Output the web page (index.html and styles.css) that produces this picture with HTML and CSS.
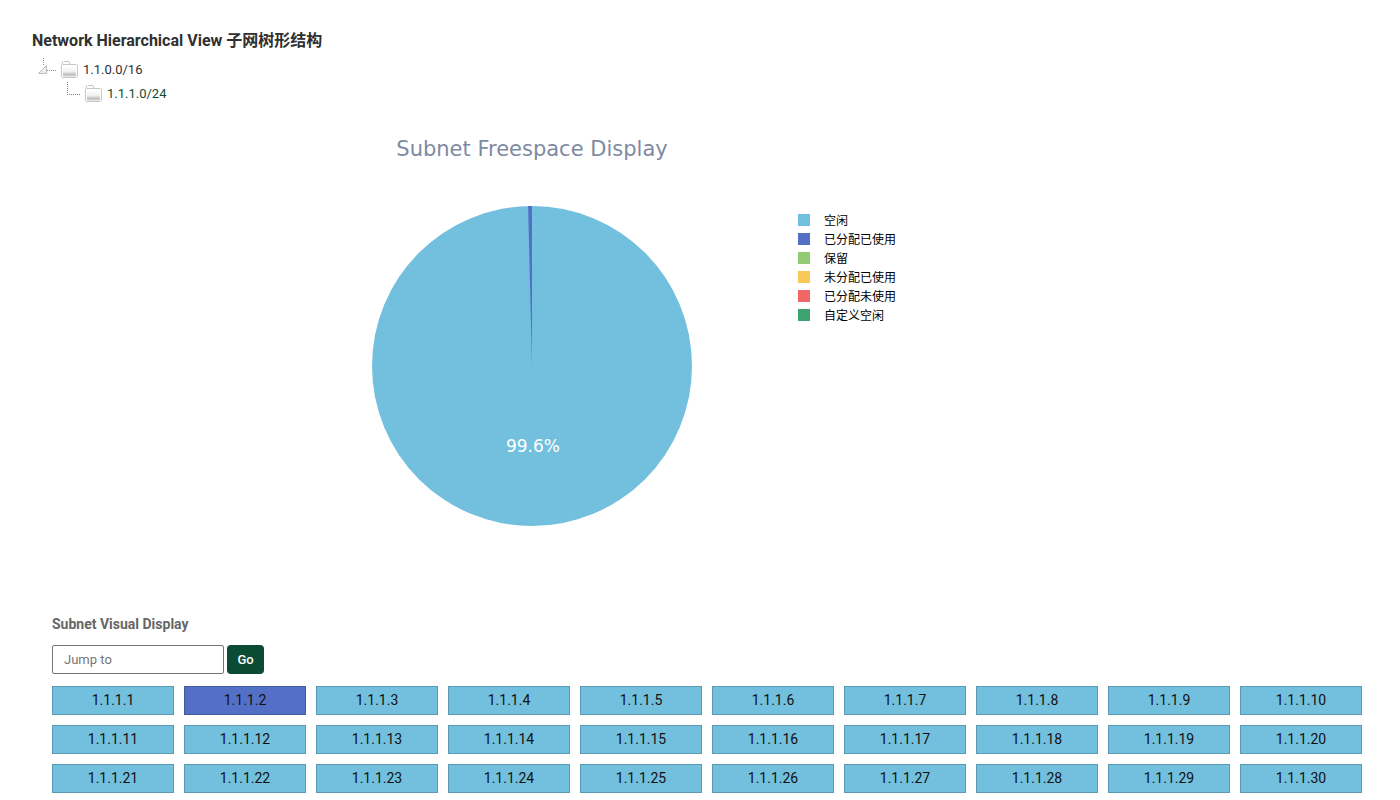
FILE: index.html
```html
<!DOCTYPE html>
<html lang="zh">
<head>
<meta charset="utf-8">
<title>Network Hierarchical View</title>
<link rel="stylesheet" href="styles.css">
</head>
<body>
<svg class="defs" width="0" height="0" aria-hidden="true">
  <defs>
    <linearGradient id="face" x1="0" y1="0" x2="0" y2="1">
      <stop offset="0" stop-color="#fff"/>
      <stop offset="0.5" stop-color="#f0f0f0"/>
      <stop offset="0.8" stop-color="#bcbcbc"/>
      <stop offset="1" stop-color="#f0f0f0"/>
    </linearGradient>
    <symbol id="folder" viewBox="0 0 24 24">
      <path d="M6.500 6V4.500q0-1 1-1h4.500q1.500 0 1.500 1V6" fill="#fff" stroke="#c4c4c4"/>
      <rect x="5.500" y="6.500" width="16" height="13" rx="1" fill="#fff" stroke="#c8c8c8"/>
      <rect x="7" y="8" width="13" height="11" rx="1" fill="url(#face)"/>
    </symbol>
  </defs>
</svg>
<main class="page">
  <section class="tree">
    <h1 class="tree-title">Network Hierarchical View 子网树形结构</h1>
    <ul class="tree-list">
      <li>
        <div class="node">
          <svg class="node-icon" viewBox="0 0 24 24" aria-hidden="true">
            <path d="M11.500 0V8M15 12.500H24" fill="none" stroke="#909090" stroke-dasharray="1 1"/>
            <path d="M6.500 15.500L14.500 7.500V15.500Z" fill="#eee" stroke="#bdbdbd" stroke-linejoin="round"/>
          </svg>
          <svg class="node-icon" aria-hidden="true"><use href="#folder"/></svg>
          <a class="node-link" href="#">1.1.0.0/16</a>
        </div>
        <ul class="tree-list tree-children">
          <li>
            <div class="node">
              <svg class="node-icon" viewBox="0 0 24 24" aria-hidden="true">
                <path d="M11.500 0V12M11 12.500H24" fill="none" stroke="#808080" stroke-dasharray="1 1"/>
              </svg>
              <svg class="node-icon" aria-hidden="true"><use href="#folder"/></svg>
              <a class="node-link" href="#">1.1.1.0/24</a>
            </div>
          </li>
        </ul>
      </li>
    </ul>
  </section>

  <section class="chart">
    <div class="plot">
      <h2 class="chart-title">Subnet Freespace Display</h2>
      <svg class="pie" viewBox="0 0 320 320" role="img" aria-label="Subnet Freespace Display">
        <circle cx="160" cy="160" r="160" fill="#73c0de"/>
        <path d="M160 160L156.070 0.050A160 160 0 0 1 160 0Z" fill="#5470c6"/>
        <text class="pie-label" x="161" y="246">99.6%</text>
      </svg>
    </div>
    <ul class="legend">
      <li class="legend-item"><span class="swatch free"></span>空闲</li>
      <li class="legend-item"><span class="swatch used"></span>已分配已使用</li>
      <li class="legend-item"><span class="swatch reserved"></span>保留</li>
      <li class="legend-item"><span class="swatch rogue"></span>未分配已使用</li>
      <li class="legend-item"><span class="swatch unused"></span>已分配未使用</li>
      <li class="legend-item"><span class="swatch custom"></span>自定义空闲</li>
    </ul>
  </section>

  <section class="visual">
    <h2 class="visual-title">Subnet Visual Display</h2>
    <form class="jump">
      <input class="jump-input" type="text" placeholder="Jump to" aria-label="Jump to">
      <button class="jump-button" type="button">Go</button>
    </form>
    <div class="addresses">
      <a class="ip" href="#">1.1.1.1</a>
      <a class="ip ip-used" href="#">1.1.1.2</a>
      <a class="ip" href="#">1.1.1.3</a>
      <a class="ip" href="#">1.1.1.4</a>
      <a class="ip" href="#">1.1.1.5</a>
      <a class="ip" href="#">1.1.1.6</a>
      <a class="ip" href="#">1.1.1.7</a>
      <a class="ip" href="#">1.1.1.8</a>
      <a class="ip" href="#">1.1.1.9</a>
      <a class="ip" href="#">1.1.1.10</a>
      <a class="ip" href="#">1.1.1.11</a>
      <a class="ip" href="#">1.1.1.12</a>
      <a class="ip" href="#">1.1.1.13</a>
      <a class="ip" href="#">1.1.1.14</a>
      <a class="ip" href="#">1.1.1.15</a>
      <a class="ip" href="#">1.1.1.16</a>
      <a class="ip" href="#">1.1.1.17</a>
      <a class="ip" href="#">1.1.1.18</a>
      <a class="ip" href="#">1.1.1.19</a>
      <a class="ip" href="#">1.1.1.20</a>
      <a class="ip" href="#">1.1.1.21</a>
      <a class="ip" href="#">1.1.1.22</a>
      <a class="ip" href="#">1.1.1.23</a>
      <a class="ip" href="#">1.1.1.24</a>
      <a class="ip" href="#">1.1.1.25</a>
      <a class="ip" href="#">1.1.1.26</a>
      <a class="ip" href="#">1.1.1.27</a>
      <a class="ip" href="#">1.1.1.28</a>
      <a class="ip" href="#">1.1.1.29</a>
      <a class="ip" href="#">1.1.1.30</a>
    </div>
  </section>
</main>
</body>
</html>
```

FILE: styles.css
```css
* {
  box-sizing: border-box;
}

body {
  margin: 0;
  background: #fff;
  color: #303030;
  font-family: Roboto, "Noto Sans CJK SC", sans-serif;
  font-size: 14px;
}

h1, h2, ul {
  margin: 0;
  padding: 0;
}

ul {
  list-style: none;
}

.defs {
  display: block;
}

.page {
  padding: 29px 32px 0;
}

.tree-title {
  margin-bottom: 5px;
  font-size: 16px;
  font-weight: 700;
  line-height: 24px;
}

.tree-children {
  padding-left: 24px;
}

.node {
  display: flex;
  align-items: center;
  height: 24px;
}

.node-icon {
  flex: none;
  width: 24px;
  height: 24px;
}

.node-link {
  padding-left: 3px;
  color: #303030;
  font-size: 13px;
  line-height: 24px;
  text-decoration: none;
}

.tree-children .node-link {
  color: #0c4b33;
}

.chart {
  display: flex;
  gap: 106px;
  padding: 29px 0 0 340px;
}

.plot {
  flex: none;
  width: 320px;
}

.chart-title {
  margin-bottom: 43px;
  color: #7e8aa2;
  font-family: "DejaVu Sans", sans-serif;
  font-size: 21px;
  font-weight: 400;
  line-height: 28px;
  text-align: center;
  white-space: nowrap;
}

.pie {
  display: block;
  width: 320px;
  height: 320px;
}

.pie-label {
  fill: #fff;
  font-family: "DejaVu Sans", sans-serif;
  font-size: 17px;
  text-anchor: middle;
}

.legend {
  padding-top: 75px;
}

.legend-item {
  display: flex;
  align-items: center;
  gap: 14px;
  height: 19px;
  color: #000;
  font-family: "Noto Sans CJK SC", sans-serif;
  font-size: 12px;
  line-height: 19px;
}

.swatch {
  width: 12px;
  height: 12px;
}

.free { background: #73c0de; }
.used { background: #5470c6; }
.reserved { background: #91cc75; }
.rogue { background: #fac858; }
.unused { background: #ee6666; }
.custom { background: #3ba272; }

.visual {
  padding: 88px 6px 0 20px;
}

.visual-title {
  color: #666;
  font-size: 14px;
  font-weight: 700;
  line-height: 20px;
}

.jump {
  display: flex;
  gap: 3px;
  margin: 11px 0 12px;
}

.jump-input {
  width: 172px;
  height: 29px;
  padding: 0 11px;
  border: 1px solid #767676;
  border-radius: 2px;
  background: #fff;
  font-family: Roboto, sans-serif;
  font-size: 13px;
}

.jump-input::placeholder {
  color: #757575;
}

.jump-button {
  width: 37px;
  height: 29px;
  padding: 0;
  border: 0;
  border-radius: 4px;
  background: #0c4b33;
  color: #fff;
  font-family: Roboto, sans-serif;
  font-size: 13px;
  font-weight: 500;
}

.addresses {
  display: grid;
  grid-template-columns: repeat(10, 1fr);
  gap: 10px;
}

.ip {
  height: 29px;
  border: 1px solid #5a9ab2;
  background: #73c0de;
  color: #111;
  font-size: 14px;
  line-height: 27px;
  text-align: center;
  text-decoration: none;
}

.ip-used {
  border-color: #435a9e;
  background: #5470c6;
}
```
